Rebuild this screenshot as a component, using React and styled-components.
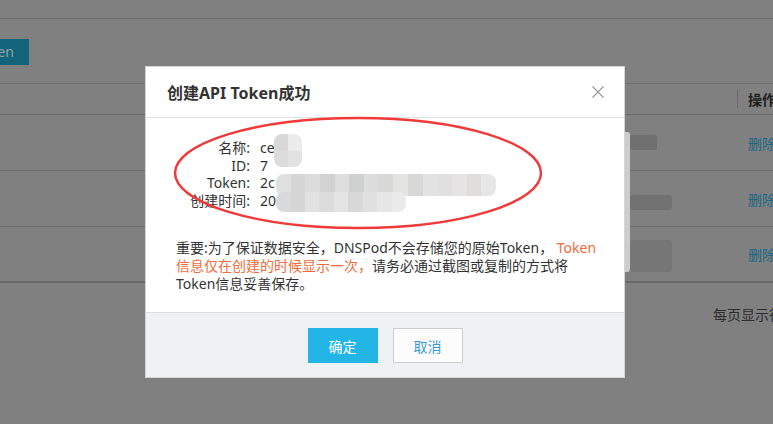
import React from 'react'
import styled, { createGlobalStyle } from 'styled-components'

const GlobalStyle = createGlobalStyle`
    html, body {
        margin: 0;
        padding: 0;
        height: 424px;
        overflow: hidden;
        background-color: #808080;
    }
    body {
        font-family: "Noto Sans", "Noto Sans CJK SC", sans-serif;
        font-size: 14px;
        color: #333;
    }
`

const tokenCells = ['#e0e0e0', '#d6d6d6', '#dcdcdc', '#d2d2d2', '#dedede', '#cfd1d0', '#dcdcdc', '#d8d8d8', '#e4e4e0', '#d8d8d8', '#e2e2e2', '#e0e0e0', '#e6e4e4', '#e0dcdc', '#e6e6e6']
const timeCells = ['#dadada', '#d6d6d6', '#e2e2e2', '#dcdcdc', '#e4e4e4', '#d8d8d8', '#e0e0e0', '#e6e6e6', '#eaeaea']
const nameCells = ['#d8d8d8', '#ececec', '#dcdcdc', '#e2e2e2']

const rows = [1, 2, 3]

function CloseIcon() {
    return (
        <svg width="12" height="12" viewBox="0 0 12 12">
            <path d="M0.5 0.5 L11.5 11.5 M11.5 0.5 L0.5 11.5" stroke="#9a9a9a" strokeWidth="1.2" fill="none" />
        </svg>
    )
}

function App() {
    return (
        <>
            <GlobalStyle />
            <Page>
                <TopBar />
                <Toolbar>
                    <ButtonClip>
                        <AddButton>创建API Token</AddButton>
                    </ButtonClip>
                </Toolbar>
                <Table>
                    <HeaderRow>
                        <Cell />
                        <HeaderCell>操作</HeaderCell>
                    </HeaderRow>
                    {rows.map((r) => (
                        <Row key={r} $last={r === rows.length}>
                            <Cell />
                            <OpCell><DeleteLink>删除</DeleteLink></OpCell>
                        </Row>
                    ))}
                    {/* redacted data, blurred in the screenshot */}
                    <Redact $x={620} $y={48} $w={10} $h={140} $c="#cdcdcd" />
                    <Redact $x={630} $y={51} $w={27} $h={15} $c="#6f6f6f" />
                    <Redact $x={630} $y={111} $w={42} $h={15} $c="#727272" />
                    <Redact $x={630} $y={156} $w={42} $h={32} $c="#777777" />
                </Table>
                <Pager>
                    <span>每页显示行数：10 条</span>
                </Pager>
            </Page>

            <Modal>
                <ModalHeader>
                    <ModalTitle>创建API Token成功</ModalTitle>
                    <CloseButton><CloseIcon /></CloseButton>
                </ModalHeader>
                <ModalBody>
                    <InfoBlock>
                        <Label>名称:</Label>
                        <Value>ce</Value>
                        <Label>ID:</Label>
                        <Value>7</Value>
                        <Label>Token:</Label>
                        <Value>2c</Value>
                        <Label>创建时间:</Label>
                        <Value>20</Value>
                        <Mosaic $x={98} $y={-5} $w={28} $h={33} $cols={2}>
                            {nameCells.map((c, i) => <MosaicCell key={i} $c={c} />)}
                        </Mosaic>
                        <Mosaic $x={100} $y={35} $w={220} $h={22} $cols={tokenCells.length}>
                            {tokenCells.map((c, i) => <MosaicCell key={i} $c={c} />)}
                        </Mosaic>
                        <Mosaic $x={100} $y={53} $w={130} $h={20} $cols={timeCells.length}>
                            {timeCells.map((c, i) => <MosaicCell key={i} $c={c} />)}
                        </Mosaic>
                    </InfoBlock>
                    <Notice>
                        重要:为了保证数据安全，DNSPod不会存储您的原始Token， <Warn>Token信息仅在创建的时候显示一次，</Warn>请务必通过截图或复制的方式将Token信息妥善保存。
                    </Notice>
                </ModalBody>
                <ModalFooter>
                    <PrimaryButton>确定</PrimaryButton>
                    <GhostButton>取消</GhostButton>
                </ModalFooter>
                <Circle width="480" height="312" viewBox="0 0 480 312">
                    <ellipse cx="212" cy="106" rx="183" ry="55" fill="none" stroke="#f03a3a" strokeWidth="2.5" />
                </Circle>
            </Modal>
        </>
    )
}

export default App

const Page = styled.div`
    width: 900px;
    height: 424px;
    background-color: #808080;
`

const TopBar = styled.div`
    height: 18px;
    border-bottom: 1px solid #6d6d6d;
`

const Toolbar = styled.div`
    display: flex;
    padding-top: 20px;
`

const ButtonClip = styled.div`
    width: 29px;
    height: 26px;
    overflow: hidden;
    display: flex;
    justify-content: flex-end;
`

const AddButton = styled.div`
    flex-shrink: 0;
    height: 26px;
    line-height: 26px;
    padding: 0 15px;
    white-space: nowrap;
    background-color: #13637a;
    color: #8fa3aa;
    font-size: 14px;
`

const Table = styled.div`
    position: relative;
    margin-top: 18px;
    border-top: 1px solid #6e6e6e;
`

const HeaderRow = styled.div`
    display: grid;
    grid-template-columns: 737px 1fr;
    height: 30px;
    border-bottom: 1px solid #6a6a6a;
`

const Row = styled.div`
    display: grid;
    grid-template-columns: 737px 1fr;
    height: ${(p) => (p.$last ? '54px' : '55px')};
    border-bottom: ${(p) => (p.$last ? '2px solid #686868' : '1px solid #6e6e6e')};
`

const Cell = styled.div``

const HeaderCell = styled.div`
    display: flex;
    align-items: center;
    align-self: center;
    height: 18px;
    padding-left: 10px;
    font-weight: 700;
    color: #1f1f1f;
    white-space: nowrap;
    border-left: 1px solid #6a6a6a;
`

const OpCell = styled.div`
    display: flex;
    align-items: center;
    padding-left: 11px;
`

const DeleteLink = styled.span`
    color: #1c6884;
    white-space: nowrap;
`

const Redact = styled.div`
    position: absolute;
    left: ${(p) => p.$x}px;
    top: ${(p) => p.$y}px;
    width: ${(p) => p.$w}px;
    height: ${(p) => p.$h}px;
    background-color: ${(p) => p.$c};
    border-radius: 3px;
`

const Pager = styled.div`
    display: flex;
    padding: 23px 0 0 713px;
    white-space: nowrap;
    color: #2e2e2e;
    line-height: 18px;
`

const Modal = styled.div`
    position: fixed;
    left: 145px;
    top: 66px;
    width: 478px;
    border: 1px solid #d4d4d4;
    background-color: #fff;
    display: flex;
    flex-direction: column;
`

const ModalHeader = styled.div`
    height: 50px;
    display: flex;
    align-items: center;
    justify-content: space-between;
    padding: 0 20px 0 21px;
    border-bottom: 1px solid #e1e1e1;
`

const ModalTitle = styled.span`
    font-size: 16px;
    font-weight: 700;
    color: #333;
`

const CloseButton = styled.span`
    display: flex;
    width: 12px;
    height: 12px;
    cursor: pointer;
`

const ModalBody = styled.div`
    height: 194px;
    box-sizing: border-box;
    padding: 21px 20px 0 30px;
`

const InfoBlock = styled.div`
    position: relative;
    display: grid;
    grid-template-columns: 74px 1fr;
    column-gap: 10px;
    line-height: 17.5px;
    color: #333;
`

const Label = styled.span`
    text-align: right;
    white-space: nowrap;
`

const Value = styled.span``

const Mosaic = styled.div`
    position: absolute;
    left: ${(p) => p.$x}px;
    top: ${(p) => p.$y}px;
    width: ${(p) => p.$w}px;
    height: ${(p) => p.$h}px;
    display: grid;
    grid-template-columns: repeat(${(p) => p.$cols}, 1fr);
    border-radius: 8px;
    overflow: hidden;
    filter: blur(0.6px);
`

const MosaicCell = styled.div`
    background-color: ${(p) => p.$c};
`

const Notice = styled.p`
    margin: 30px 0 0;
    line-height: 18px;
    color: #333;
`

const Warn = styled.span`
    color: #f26b3a;
`

const ModalFooter = styled.div`
    height: 65px;
    box-sizing: border-box;
    border-top: 1px solid #dcdcdc;
    background-color: #eef2f5;
    display: flex;
    justify-content: center;
    align-items: flex-start;
    gap: 15px;
    padding-top: 15px;
`

const PrimaryButton = styled.button`
    width: 70px;
    height: 35px;
    border: 0;
    background-color: #22b5e6;
    color: #fff;
    font-family: inherit;
    font-size: 14px;
    cursor: pointer;
`

const GhostButton = styled.button`
    width: 70px;
    height: 35px;
    border: 1px solid #cdcdcd;
    background-color: #fcfcfc;
    color: #3a9bcc;
    font-family: inherit;
    font-size: 14px;
    cursor: pointer;
`

const Circle = styled.svg`
    position: absolute;
    left: 0;
    top: 0;
    pointer-events: none;
    overflow: visible;
`
